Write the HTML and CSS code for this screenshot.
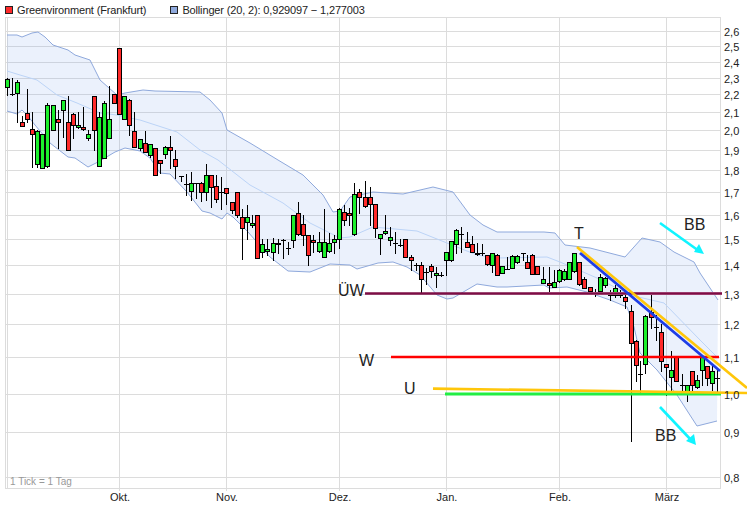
FILE: index.html
```html
<!DOCTYPE html>
<html lang="en">
<head>
  <meta charset="UTF-8" />
  <title>Greenvironment (Frankfurt)</title>
  <link rel="stylesheet" href="styles.css">
</head>
<body>
  <div class="legend">
    <div class="legend-item"><span class="swatch swatch-price"></span>Greenvironment (Frankfurt)</div>
    <div class="legend-item"><span class="swatch swatch-band"></span>Bollinger (20, 2): 0,929097 &minus; 1,277003</div>
  </div>

  <svg id="chart" class="chart" viewBox="0 17 747 491" width="747" height="491">
    <g id="grid" class="grid"></g>
    <g id="bands"></g>
    <g id="candles"></g>
    <g id="drawn"></g>
    <g id="labels"></g>
  </svg>

  <script src="chart.js"></script>
</body>
</html>
```

FILE: styles.css
```css
html, body {
  margin: 0;
  padding: 0;
  background-color: #fff;
}
body {
  width: 747px;
  height: 508px;
  overflow: hidden;
  font-family: "Liberation Sans", Arial, sans-serif;
}
.legend {
  display: flex;
  gap: 24px;
  height: 17px;
  padding-left: 5px;
  box-sizing: border-box;
  font-size: 11px;
  letter-spacing: -0.15px;
  color: #222;
}
.legend-item {
  display: flex;
  align-items: center;
  gap: 4px;
  height: 20px;
}
.swatch {
  width: 6px;
  height: 6px;
  border: 1px solid #222;
}
.swatch-price {
  background-color: #ff2a2a;
}
.swatch-band {
  background-color: #8fa9dc;
}
.chart {
  display: block;
}
.grid line {
  stroke: #dcdcdc;
  stroke-width: 1;
  shape-rendering: crispEdges;
}
.band-fill {
  fill: #6f9fec;
  fill-opacity: 0.14;
  stroke: none;
}
.band-edge {
  fill: none;
  stroke: #8fa9dc;
  stroke-width: 1;
}
.band-mid {
  fill: none;
  stroke: #bcd4f7;
  stroke-width: 1;
}
.wick {
  stroke: #000;
  stroke-width: 1;
  shape-rendering: crispEdges;
}
.up {
  fill: #1cf02c;
  stroke: #000;
  shape-rendering: crispEdges;
}
.down {
  fill: #ff2a2a;
  stroke: #000;
  shape-rendering: crispEdges;
}
.trend {
  fill: none;
  stroke-linecap: butt;
}
.line-maroon {
  stroke: #7d0d45;
  stroke-width: 2.4;
}
.line-maroon-glow {
  stroke: #a64d7a;
  stroke-width: 3;
}
.line-maroon-core {
  stroke: #7d0d45;
  stroke-width: 1.4;
}
.line-red {
  stroke: #ff0000;
  stroke-width: 2.4;
}
.line-orange {
  stroke: #ffc60a;
  stroke-width: 2.6;
}
.line-blue {
  stroke: #1f3ee6;
  stroke-width: 2.8;
}
.line-green {
  stroke: #22ee44;
  stroke-width: 3;
}
.line-cyan {
  stroke: #10f4ff;
  stroke-width: 2.6;
}
.arrow-head {
  fill: #10f4ff;
}
.axis-label {
  font-family: "Liberation Sans", Arial, sans-serif;
  font-size: 11px;
  fill: #222;
}
.axis-month {
  text-anchor: middle;
}
.tick-note {
  font-family: "Liberation Sans", Arial, sans-serif;
  font-size: 10px;
  fill: #999;
}
.note {
  font-family: "Liberation Sans", Arial, sans-serif;
  font-size: 16px;
  fill: #222;
}
```

FILE: chart.js
```js
const SVG_NS = "http://www.w3.org/2000/svg";

const PLOT = { left: 5, inner: 7, top: 17, right: 720, bottom: 488 };

const priceTicks = [
  ["2,6", 31], ["2,5", 46], ["2,4", 62], ["2,3", 78], ["2,2", 94], ["2,1", 112],
  ["2,0", 130], ["1,9", 150], ["1,8", 170], ["1,7", 192], ["1,6", 215], ["1,5", 239],
  ["1,4", 265], ["1,3", 294], ["1,2", 324], ["1,1", 357], ["1,0", 394], ["0,9", 432],
  ["0,8", 477]
];

const monthTicks = [
  ["Okt.", 119], ["Nov.", 226], ["Dez.", 339], ["Jan.", 446], ["Feb.", 559], ["März", 666]
];

const upperBand = [
  [7,35],[17,35],[22,37],[32,33],[38,32],[45,37],[53,45],[68,50],[75,55],[90,60],[100,80],
  [117,95],[125,93],[143,90],[155,91],[200,92],[210,100],[222,113],[227,130],[250,143],
  [278,160],[303,175],[323,195],[333,212],[340,211],[350,197],[373,192],[403,194],[433,187],
  [453,192],[470,215],[483,225],[497,232],[544,232],[555,233],[565,245],[590,248],[625,257],
  [642,238],[660,242],[674,252],[694,262],[700,273],[718,300]
];

const lowerBand = [
  [7,111],[17,114],[22,110],[27,115],[35,125],[50,143],[68,157],[75,158],[88,167],[98,162],
  [115,152],[125,148],[140,151],[150,158],[160,173],[170,174],[187,192],[202,211],[210,213],
  [222,219],[227,213],[233,217],[248,232],[270,257],[288,271],[310,272],[330,264],[350,265],
  [357,269],[378,263],[393,262],[407,267],[420,275],[437,295],[447,299],[453,298],[477,284],
  [497,287],[507,287],[544,285],[549,288],[567,287],[587,292],[610,300],[627,307],[634,327],
  [640,353],[657,370],[677,395],[697,426],[717,421]
];

const midBand = [
  [7,71],[20,75],[37,80],[57,95],[77,103],[100,113],[117,115],[125,117],[140,120],[177,132],
  [200,150],[218,160],[250,185],[283,203],[310,223],[340,238],[350,237],[373,227],[417,231],
  [447,243],[477,255],[497,258],[547,257],[560,262],[597,278],[630,295],[664,303],[700,340],
  [717,357]
];

// x, wick top, wick bottom, body top, body bottom, kind (g green, r red, d doji)
const candles = [
  [7,78,95,79,87,"g"],[12,78,95,94,94,"d"],[17,80,122,82,93,"g"],[22,116,126,122,126,"r"],
  [27,89,122,113,119,"r"],[32,112,167,129,134,"r"],[37,130,167,131,164,"g"],[42,134,168,134,168,"g"],
  [47,103,167,105,166,"g"],[53,105,130,105,130,"g"],[58,110,148,119,122,"r"],[63,100,137,100,110,"g"],
  [68,96,150,122,150,"r"],[73,113,138,114,125,"r"],[78,112,128,125,127,"g"],[83,107,130,127,129,"r"],
  [88,130,140,134,138,"g"],[94,96,150,96,130,"r"],[99,112,166,117,166,"g"],[104,101,158,103,158,"g"],
  [109,86,138,119,138,"g"],[114,94,103,94,103,"r"],[119,48,114,48,114,"r"],[124,96,119,96,119,"g"],
  [129,99,135,100,125,"r"],[134,112,147,131,147,"r"],[140,139,150,139,148,"g"],[145,131,152,143,152,"r"],
  [150,144,157,144,155,"g"],[155,148,175,148,175,"r"],[160,160,173,160,163,"r"],[165,146,158,147,154,"g"],
  [170,136,168,147,150,"r"],[175,150,178,159,166,"r"],[181,176,181,176,176,"d"],[186,174,195,184,184,"d"],
  [191,172,200,183,191,"g"],[196,183,198,183,183,"d"],[201,182,201,183,192,"r"],[206,164,200,175,192,"g"],
  [211,175,207,175,187,"r"],[216,175,202,186,199,"r"],[221,177,209,192,192,"d"],[226,188,204,188,193,"r"],
  [232,202,213,202,210,"r"],[237,192,217,192,215,"r"],[242,209,259,217,228,"r"],[247,205,239,217,222,"g"],
  [252,215,227,223,225,"g"],[257,215,258,215,258,"r"],[262,239,257,244,252,"g"],[267,239,255,249,251,"g"],
  [273,238,260,243,252,"g"],[278,239,253,243,244,"g"],[283,239,258,240,240,"d"],[288,242,254,248,248,"d"],
  [293,215,247,215,240,"g"],[298,202,235,213,234,"r"],[303,215,245,224,235,"r"],[308,235,265,235,255,"r"],
  [313,235,252,240,242,"r"],[319,232,252,242,251,"g"],[324,209,257,242,257,"g"],[329,233,252,243,251,"g"],
  [334,235,253,239,242,"g"],[339,208,248,209,239,"g"],[344,205,225,212,220,"r"],[349,208,225,213,215,"r"],
  [354,183,235,194,234,"g"],[359,189,213,192,197,"r"],[365,181,207,197,206,"r"],[370,187,225,197,204,"r"],
  [375,204,237,204,228,"r"],[380,234,254,234,238,"g"],[385,215,234,231,233,"g"],[390,227,245,237,240,"g"],
  [395,232,253,243,243,"d"],[400,239,246,245,245,"d"],[405,239,257,239,257,"r"],[411,255,270,257,260,"r"],
  [416,263,270,265,265,"d"],[421,262,293,265,279,"r"],[426,268,284,272,272,"d"],[431,264,277,266,271,"r"],
  [436,267,287,273,275,"g"],[441,272,276,275,275,"d"],[446,252,275,252,260,"g"],[451,241,261,241,260,"g"],
  [456,229,253,230,244,"g"],[461,227,252,234,234,"d"],[467,232,245,242,247,"r"],[472,236,252,244,252,"r"],
  [477,243,255,253,254,"r"],[482,244,255,253,253,"d"],[487,255,265,255,264,"r"],[492,253,272,253,265,"g"],
  [497,254,275,255,275,"r"],[502,266,273,266,273,"g"],[507,257,268,269,269,"d"],[512,255,268,256,268,"g"],
  [517,255,263,256,262,"g"],[523,253,260,253,253,"d"],[527,255,268,262,268,"r"],[532,254,274,255,274,"r"],
  [537,266,274,266,274,"r"],[543,267,283,279,283,"g"],[549,267,293,283,285,"r"],[554,270,287,282,287,"g"],
  [559,269,282,270,281,"g"],[564,269,280,271,279,"g"],[569,262,279,262,279,"g"],[574,253,272,253,271,"g"],
  [579,262,285,262,284,"r"],[584,277,288,279,288,"r"],[590,287,294,287,291,"r"],[595,289,296,294,294,"d"],
  [600,274,293,277,291,"g"],[605,277,287,278,285,"g"],[610,290,300,295,295,"d"],[615,285,297,288,295,"g"],
  [620,290,297,295,295,"d"],[625,295,308,297,301,"r"],[631,305,441,311,343,"r"],[636,340,381,341,365,"r"],
  [640,361,392,374,374,"d"],[645,315,373,316,364,"g"],[651,293,328,312,317,"r"],[656,315,340,327,327,"d"],
  [661,324,371,332,361,"r"],[666,367,395,364,367,"r"],[671,351,390,370,377,"g"],[676,357,381,357,381,"r"],
  [682,374,393,385,385,"d"],[687,385,401,385,393,"g"],[692,371,391,371,385,"r"],[697,375,388,380,387,"g"],
  [702,356,385,356,370,"g"],[707,366,385,366,378,"r"],[712,366,390,371,383,"g"],[717,370,391,378,378,"d"]
];

function el(parentId, tag, attrs, text) {
  const node = document.createElementNS(SVG_NS, tag);
  for (const key in attrs) node.setAttribute(key, attrs[key]);
  if (text) node.textContent = text;
  document.getElementById(parentId).appendChild(node);
  return node;
}

function points(list) {
  return list.map(p => p.join(",")).join(" ");
}

function drawGrid() {
  const hLine = y => el("grid", "line", { x1: PLOT.left, x2: PLOT.right + 1, y1: y + 0.5, y2: y + 0.5 });
  const vLine = (x, y2) => el("grid", "line", { x1: x + 0.5, x2: x + 0.5, y1: PLOT.top, y2: y2 });

  hLine(PLOT.top);
  hLine(PLOT.bottom);
  priceTicks.forEach(t => hLine(t[1]));
  vLine(PLOT.left, PLOT.bottom + 1);
  vLine(PLOT.inner, PLOT.bottom + 1);
  vLine(PLOT.right, PLOT.bottom + 1);
  monthTicks.forEach(t => vLine(t[1], PLOT.bottom + 3));
}

function drawBands() {
  const outline = upperBand.concat(lowerBand.slice().reverse());
  el("bands", "polygon", { class: "band-fill", points: points(outline) });
  el("bands", "polyline", { class: "band-mid", points: points(midBand) });
  el("bands", "polyline", { class: "band-edge", points: points(upperBand) });
  el("bands", "polyline", { class: "band-edge", points: points(lowerBand) });
}

function drawCandles() {
  candles.forEach(([x, high, low, top, bottom, kind]) => {
    el("candles", "line", { class: "wick", x1: x + 0.5, x2: x + 0.5, y1: high, y2: low + 1 });
    if (kind === "d") {
      el("candles", "line", { class: "wick", x1: x - 2, x2: x + 3, y1: top + 0.5, y2: top + 0.5 });
    } else {
      el("candles", "rect", {
        class: kind === "g" ? "up" : "down",
        x: x - 1.5, y: top + 0.5, width: 4, height: Math.max(bottom - top, 1)
      });
    }
  });
}

function trend(cls, x1, y1, x2, y2) {
  el("drawn", "line", { class: "trend " + cls, x1, y1, x2, y2 });
}

function drawAnnotations() {
  // the 1,3 line is solid up to Feb. and softer after it
  trend("line-maroon", 365, 293.5, 530, 293.5);
  trend("line-maroon-glow", 530, 293.5, 722, 293.5);
  trend("line-maroon-core", 530, 293.5, 722, 293.5);
  trend("line-red", 391, 357, 719, 357);
  trend("line-green", 445, 394, 721, 394);
  trend("line-orange", 433, 388.6, 747, 393);
  trend("line-orange", 577, 247, 747, 388);
  trend("line-blue", 580, 253, 720, 371);

  trend("line-cyan", 660, 223, 699, 251);
  el("drawn", "polygon", { class: "arrow-head", points: "704,254 694,252 699,244" });
  trend("line-cyan", 660, 407, 692, 441);
  el("drawn", "polygon", { class: "arrow-head", points: "696,445 686,441 694,434" });
}

function drawLabels() {
  priceTicks.forEach(([label, y]) => {
    el("labels", "text", { class: "axis-label", x: 724, y: y + 5 }, label);
  });
  monthTicks.forEach(([label, x]) => {
    el("labels", "text", { class: "axis-label axis-month", x: x + 1, y: 501 }, label);
  });
  el("labels", "text", { class: "tick-note", x: 10, y: 485 }, "1 Tick = 1 Tag");

  [["T", 574, 239], ["BB", 684, 230], ["ÜW", 338, 296], ["W", 359, 366], ["U", 404, 394], ["BB", 655, 441]]
    .forEach(([label, x, y]) => el("labels", "text", { class: "note", x, y }, label));
}

drawGrid();
drawBands();
drawCandles();
drawAnnotations();
drawLabels();
```
